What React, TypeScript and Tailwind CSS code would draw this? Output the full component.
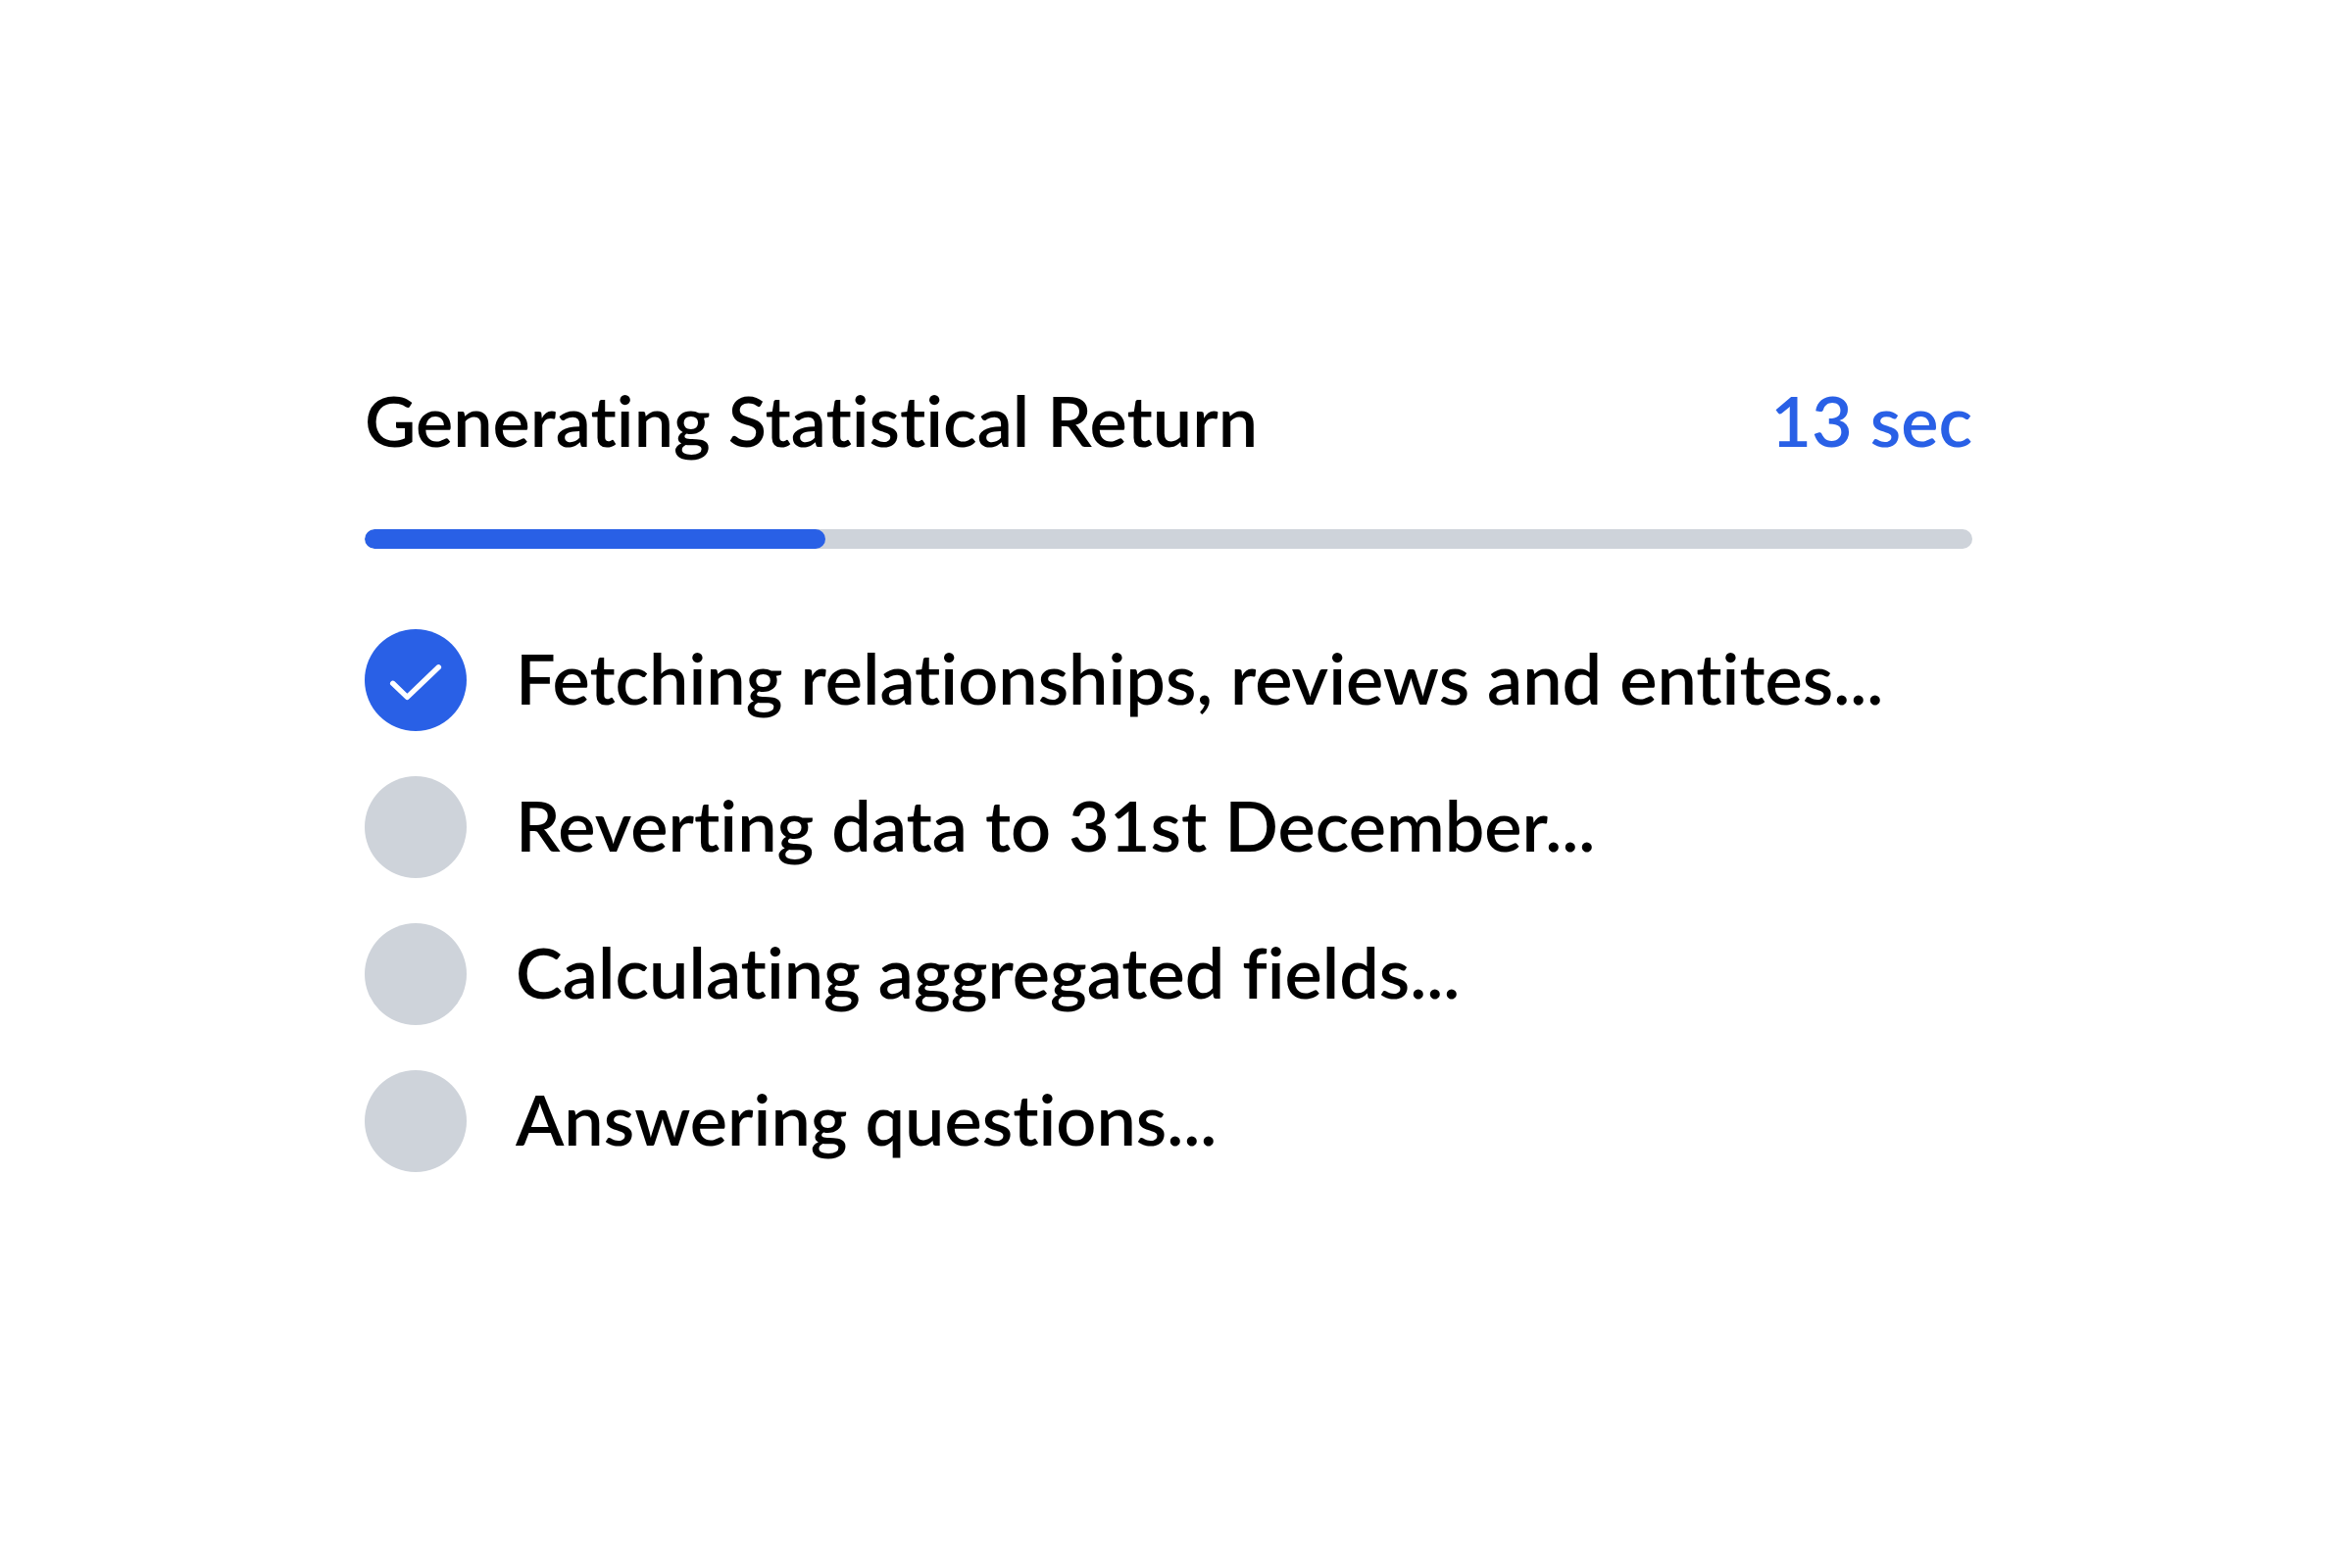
const steps = [
  { label: "Fetching relationships, reviews and entites...", done: true },
  { label: "Reverting data to 31st December...", done: false },
  { label: "Calculating aggregated fields...", done: false },
  { label: "Answering questions...", done: false },
];

const elapsed = 470;
const total = 1640;

function StepIcon({ done }: { done: boolean }) {
  if (!done) {
    return <span className="size-26 shrink-0 rounded-full bg-[#ced3da]" />;
  }

  return (
    <span className="size-26 shrink-0 rounded-full bg-[#2960e6] text-white">
      <svg viewBox="0 0 104 104" fill="none" className="size-full" aria-hidden="true">
        <path
          d="M28.7 55.3L43.4 69.4L75.4 38.8"
          stroke="currentColor"
          strokeWidth="5.4"
          strokeLinecap="round"
          strokeLinejoin="round"
        />
      </svg>
    </span>
  );
}

export default function App() {
  return (
    <main className="flex min-h-screen items-center justify-center bg-white px-6 font-['Lato',sans-serif] text-[72px] leading-[84px] font-semibold text-black [font-variant-ligatures:none]">
      <section className="w-full max-w-[1640px] pb-[18px]">
        <header className="flex items-center justify-between">
          <h1 id="progress-title">Generating Statistical Return</h1>
          <p className="text-[#2960e6]">13 sec</p>
        </header>

        <div
          role="progressbar"
          aria-labelledby="progress-title"
          aria-valuemin={0}
          aria-valuemax={total}
          aria-valuenow={elapsed}
          className="mt-[70px] h-5 overflow-hidden rounded-full bg-[#ced3da]"
        >
          <div
            className="h-full rounded-full bg-[#2960e6]"
            style={{ width: `${(elapsed / total) * 100}%` }}
          />
        </div>

        <ol className="mt-[82px] flex flex-col gap-[46px]">
          {steps.map((step) => (
            <li key={step.label} className="flex items-center gap-[50px]">
              <StepIcon done={step.done} />
              <span className="pb-1.5">{step.label}</span>
            </li>
          ))}
        </ol>
      </section>
    </main>
  );
}
